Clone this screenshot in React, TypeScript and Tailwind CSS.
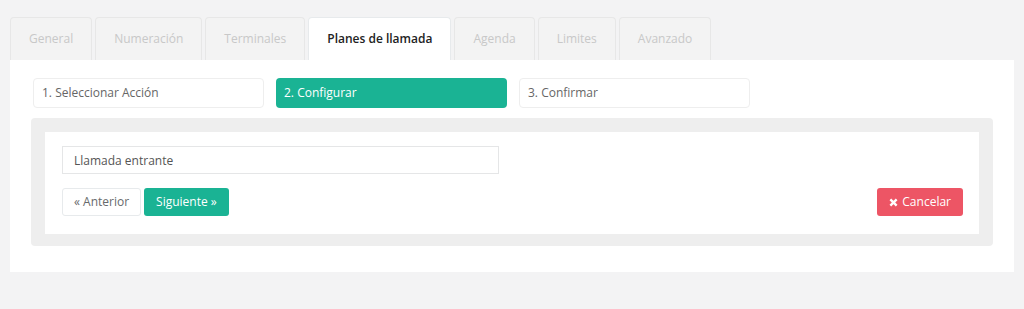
import { useState } from "react";

const tabs = [
  "General",
  "Numeración",
  "Terminales",
  "Planes de llamada",
  "Agenda",
  "Limites",
  "Avanzado",
];

const steps = ["1. Seleccionar Acción", "2. Configurar", "3. Confirmar"];

export default function App() {
  const [active, setActive] = useState(3);
  const [step] = useState(1);

  return (
    <div className="min-h-[309px] bg-[#f3f3f4] px-[10px] pt-[17px] font-['Open_Sans',sans-serif] text-[12px] text-[#676a6c]">
      {/* Tabs */}
      <ul className="flex gap-[3px]">
        {tabs.map((t, i) => (
          <li key={t}>
            <button
              onClick={() => setActive(i)}
              className={
                i === active
                  ? "h-[43px] px-[18px] rounded-t-[4px] border border-b-0 border-[#e7eaec] bg-white font-semibold text-[#222]"
                  : "h-[43px] px-[18px] rounded-t-[4px] border border-b-0 border-[#e7e7e7] bg-[#f3f3f3] text-[#c8c8c8]"
              }
            >
              {t}
            </button>
          </li>
        ))}
      </ul>

      {/* Panel */}
      <div className="bg-white px-[21px] pt-[18px] pb-[26px]">
        <div className="flex gap-3 mb-[10px] pl-[2px]">
          {steps.map((s, i) => (
            <div
              key={s}
              className={
                i === step
                  ? "w-[231px] h-[30px] flex items-center px-2 rounded-[4px] bg-[#1ab394] text-white"
                  : "w-[231px] h-[30px] flex items-center px-2 rounded-[4px] border border-[#eeeeee] bg-white text-[#666]"
              }
            >
              {s}
            </div>
          ))}
        </div>

        <div className="rounded-[4px] bg-[#eeeeee] px-[14px] pt-[14px] pb-[12px]">
          <div className="bg-white pl-[17px] pr-[16px] pt-[14px] pb-[18px]">
            <input
              defaultValue="Llamada entrante"
              className="block w-[437px] h-[28px] px-[11px] border border-[#e5e6e7] text-[12px] text-[#555] outline-none"
            />
            <div className="flex items-center mt-[14px]">
              <button className="h-[28px] px-[11px] rounded-[3px] border border-[#e7eaec] bg-white text-[#676a6c]">
                « Anterior
              </button>
              <button className="ml-[3px] h-[28px] px-3 rounded-[3px] bg-[#1ab394] text-white">
                Siguiente »
              </button>
              <button className="ml-auto h-[28px] px-3 rounded-[3px] bg-[#ed5565] text-white flex items-center gap-1">
                <svg viewBox="0 0 10 10" className="w-[9px] h-[9px]" aria-hidden="true">
                  <path d="M1.5 1.5 L8.5 8.5 M8.5 1.5 L1.5 8.5" stroke="white" strokeWidth="2.6" strokeLinecap="butt" />
                </svg>
                Cancelar
              </button>
            </div>
          </div>
        </div>
      </div>
    </div>
  );
}
